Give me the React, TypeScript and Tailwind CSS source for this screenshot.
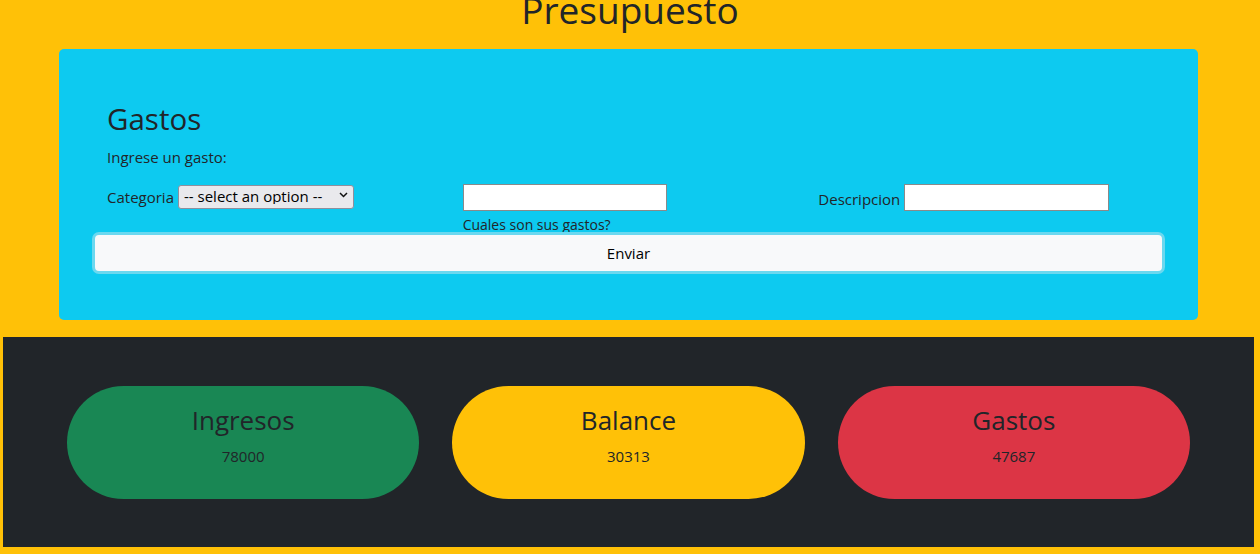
import React from "react";

const font = { fontFamily: '"Open Sans", "Noto Sans", sans-serif' };

function Pill({ title, value, color }: { title: string; value: string; color: string }) {
  return (
    <div className={`flex h-[113px] flex-1 flex-col items-center rounded-full pt-[19px] ${color}`}>
      <h3 className="text-[26px] leading-[1.2] text-[#212529]">{title}</h3>
      <p className="mt-[9px] text-[15px] leading-[1.5] text-[#212529]">{value}</p>
    </div>
  );
}

export default function App() {
  return (
    <div className="min-h-[554px] bg-[#ffc107] pb-[7px] text-[#212529]" style={font}>
      <h1 className="-mt-[12px] text-center text-[37px] leading-[1.2]">Presupuesto</h1>

      <section className="mx-[59px] mt-[17px] mr-[62px] rounded-[5px] bg-[#0dcaf0] px-[48px] pb-[46px] pt-[52px]">
        <h2 className="text-[29.5px] leading-[1.2]">Gastos</h2>
        <p className="mt-[9px] text-[15px] leading-[1.5]">Ingrese un gasto:</p>

        <form className="-mx-[12px] mt-[16px] grid grid-cols-3" onSubmit={(e) => e.preventDefault()}>
          <div className="flex items-start px-[12px]">
            <label className="mt-[2px] text-[15px] leading-[1.5]">Categoria</label>
            <div className="relative ml-[4px]">
              <select className="h-[24px] w-[176px] appearance-none rounded-[3px] border border-[#8f8f9d] bg-[#e9e9ed] pl-[5px] pr-[20px] text-[15px] leading-none text-black">
                <option>-- select an option --</option>
              </select>
              <svg className="pointer-events-none absolute right-[6px] top-[8px]" width="9" height="6" viewBox="0 0 9 6">
                <path d="M1 1l3.5 3.5L8 1" fill="none" stroke="#111" strokeWidth="1.5" />
              </svg>
            </div>
          </div>
          <div className="flex flex-col px-[12px]">
            <input className="h-[27px] w-[204px] border border-[#8a8a8a] bg-white" />
            <small className="mt-[6px] text-[14px] leading-[1.2]">Cuales son sus gastos?</small>
          </div>
          <div className="flex items-start px-[12px]">
            <label className="mt-[4px] text-[15px] leading-[1.5]">Descripcion</label>
            <input className="ml-[4px] h-[27px] w-[205px] border border-[#8a8a8a] bg-white" />
          </div>
          <div className="col-span-3 -mx-[3px] -mt-[2px]">
            <button
              type="submit"
              className="h-[42px] w-full rounded-[7px] border-[3px] border-[#6bd8ef] bg-[#f8f9fa] text-[15px] text-black"
            >
              Enviar
            </button>
          </div>
        </form>
      </section>

      <section className="ml-[3px] mr-[6px] mt-[17px] flex h-[210px] items-center gap-[33px] bg-[#212529] px-[64px]">
        <Pill title="Ingresos" value="78000" color="bg-[#198754]" />
        <Pill title="Balance" value="30313" color="bg-[#ffc107]" />
        <Pill title="Gastos" value="47687" color="bg-[#dc3545]" />
      </section>
    </div>
  );
}
